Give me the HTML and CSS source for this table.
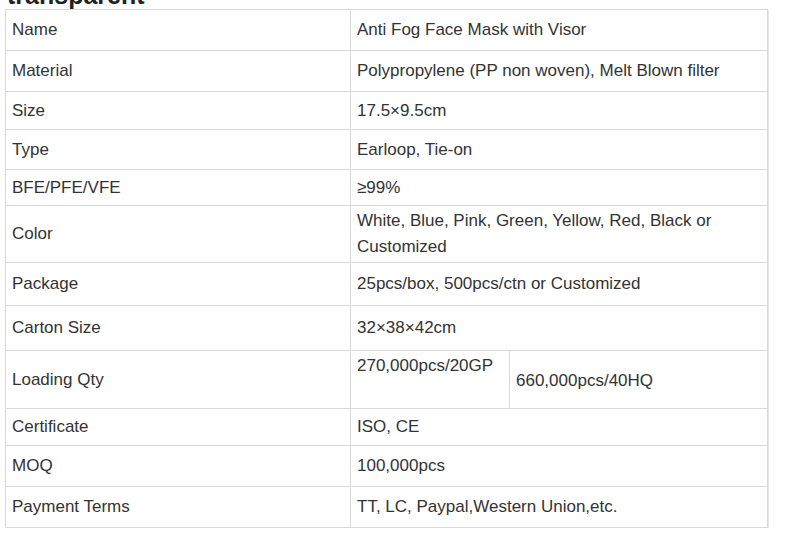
FILE: index.html
```html
<!DOCTYPE html>
<html>
<head>
<meta charset="utf-8">
<link rel="stylesheet" href="styles.css">
</head>
<body>
<h2 class="title">transparent</h2>
<table class="spec">
  <tr class="h41"><td class="k">Name</td><td class="v">Anti Fog Face Mask with Visor</td></tr>
  <tr class="h41"><td class="k">Material</td><td class="v">Polypropylene (PP non woven), Melt Blown filter</td></tr>
  <tr class="h38"><td class="k">Size</td><td class="v">17.5×9.5cm</td></tr>
  <tr class="h40"><td class="k">Type</td><td class="v">Earloop, Tie-on</td></tr>
  <tr class="h36"><td class="k">BFE/PFE/VFE</td><td class="v">≥99%</td></tr>
  <tr class="h57"><td class="k">Color</td><td class="v">White, Blue, Pink, Green, Yellow, Red, Black or Customized</td></tr>
  <tr class="h43"><td class="k">Package</td><td class="v">25pcs/box, 500pcs/ctn or Customized</td></tr>
  <tr class="h45"><td class="k">Carton Size</td><td class="v">32×38×42cm</td></tr>
  <tr class="h58"><td class="k">Loading Qty</td><td class="v split-cell"><div class="split"><div class="sub top">270,000pcs/20GP</div><div class="sub mid">660,000pcs/40HQ</div></div></td></tr>
  <tr class="h37"><td class="k">Certificate</td><td class="v">ISO, CE</td></tr>
  <tr class="h41"><td class="k">MOQ</td><td class="v">100,000pcs</td></tr>
  <tr class="h41"><td class="k">Payment Terms</td><td class="v">TT, LC, Paypal,Western Union,etc.</td></tr>
</table>
</body>
</html>
```
FILE: styles.css
```css
html, body {
  margin: 0;
  padding: 0;
  background: #fff;
}
body {
  font-family: "Liberation Sans", Arial, sans-serif;
  color: #333;
}
.title {
  margin: -17px 0 0 7px;
  font-size: 25px;
  line-height: 25px;
  font-weight: bold;
  color: #222;
  height: 26px;
  overflow: hidden;
}
.spec {
  border-collapse: collapse;
  margin-left: 5px;
  width: 763px;
  font-size: 17px;
  box-shadow: 1px 1px 0 #e6e6e6;
}
.spec td {
  border: 1px solid #d9d9d9;
  padding: 0 6px;
  vertical-align: middle;
  line-height: 26px;
}
.spec td.k { width: 332px; }
.h41 { height: 41px; }
.h38 { height: 38px; }
.h40 { height: 40px; }
.h36 { height: 36px; }
.h57 { height: 57px; }
.h43 { height: 43px; }
.h45 { height: 45px; }
.h58 { height: 58px; }
.h37 { height: 37px; }
.spec td.split-cell { padding: 0; }
.split {
  display: flex;
  height: 57px;
}
.sub {
  padding: 0 6px;
}
.sub.top {
  width: 146px;
  border-right: 1px solid #d9d9d9;
  padding-top: 2px;
}
.sub.mid {
  flex: 1;
  display: flex;
  align-items: center;
  padding-top: 2px;
}
```
